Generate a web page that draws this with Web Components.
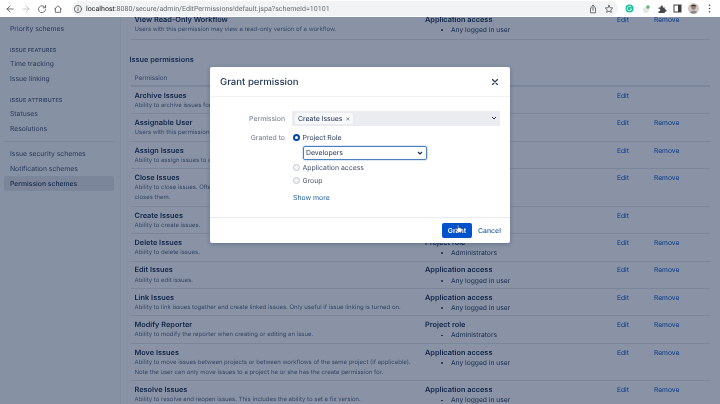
<!DOCTYPE html>
<html><head><meta charset="utf-8">
<style>
html,body{margin:0;padding:0;width:720px;height:404px;overflow:hidden;background:#fff;font-family:Inter,"Liberation Sans",sans-serif;text-rendering:geometricPrecision}
#app{position:relative;width:720px;height:404px;overflow:hidden;display:flex;flex-direction:column;filter:blur(.45px)}
</style></head><body>
<div id="app">
<chrome-bar url-host="localhost" url-path=":8080/secure/admin/EditPermissions!default.jspa?schemeId=10101"></chrome-bar>
<admin-layout>
  <side-nav slot="nav">
    <nav-item>Priority schemes</nav-item>
    <nav-heading>ISSUE FEATURES</nav-heading>
    <nav-item>Time tracking</nav-item>
    <nav-item>Issue linking</nav-item>
    <nav-heading>ISSUE ATTRIBUTES</nav-heading>
    <nav-item>Statuses</nav-item>
    <nav-item>Resolutions</nav-item>
    <nav-divider></nav-divider>
    <nav-item>Issue security schemes</nav-item>
    <nav-item>Notification schemes</nav-item>
    <nav-item selected>Permission schemes</nav-item>
  </side-nav>
  <perm-row first title="View Read-Only Workflow" group="Application access" member="Any logged in user" remove>Users with this permission may view a read-only version of a workflow.</perm-row>
  <section-heading>Issue permissions</section-heading>
  <table-head>Permission</table-head>
  <perm-row title="Archive Issues">Ability to archive issues for</perm-row>
  <perm-row title="Assignable User" remove>Users with this permission</perm-row>
  <perm-row title="Assign Issues" remove>Ability to assign issues to o</perm-row>
  <perm-row title="Close Issues" remove>Ability to close issues. Often<br>closes them.</perm-row>
  <perm-row title="Create Issues">Ability to create issues.</perm-row>
  <perm-row title="Delete Issues" group="Project role" member="Administrators" remove>Ability to delete issues.</perm-row>
  <perm-row title="Edit Issues" group="Application access" member="Any logged in user" remove>Ability to edit issues.</perm-row>
  <perm-row title="Link Issues" group="Application access" member="Any logged in user" remove>Ability to link issues together and create linked issues. Only useful if issue linking is turned on.</perm-row>
  <perm-row title="Modify Reporter" group="Project role" member="Administrators" remove>Ability to modify the reporter when creating or editing an issue.</perm-row>
  <perm-row title="Move Issues" group="Application access" member="Any logged in user" remove>Ability to move issues between projects or between workflows of the same project (if applicable).<br>Note the user can only move issues to a project he or she has the create permission for.</perm-row>
  <perm-row title="Resolve Issues" group="Application access" member="Any logged in user" remove>Ability to resolve and reopen issues. This includes the ability to set a fix version.</perm-row>
</admin-layout>
<modal-blanket></modal-blanket>
<grant-dialog></grant-dialog>
</div>
<script>
function def(name, css, html, init){
  customElements.define(name, class extends HTMLElement{
    constructor(){super();this.attachShadow({mode:'open'}).innerHTML='<style>'+css+'</style>'+html;}
    connectedCallback(){ if(init) init.call(this,this.shadowRoot); }
  });
}
const st='fill="none" stroke-linecap="round" stroke-linejoin="round"';
def('chrome-bar',`
:host{display:flex;flex:none;height:17px;background:#fff;align-items:center;box-sizing:border-box;font-family:Roboto,"Liberation Sans",sans-serif;position:relative;z-index:3}
svg{display:block;flex:none}
.nav{display:flex;width:72px;padding-left:2px;box-sizing:border-box}
.nav svg{width:16px;height:16px}
.box{width:546px;height:15px;border-radius:8px;background:#f1f3f4;display:flex;align-items:center;padding:0 4px 0 1px;box-sizing:border-box}
.box .i{margin:0 3px 0 0}
.url{flex:1;font-size:7.050px;color:#6a6e73;white-space:nowrap;letter-spacing:.01px}
.url b{font-weight:400;color:#202124}
.r{display:flex;align-items:center}
`,`
<div class="nav">
<svg viewBox="0 0 16 16" ${st} stroke="#5f6368" stroke-width=".9"><path d="M11.200 8H5M8 5 5 8l3 3"/></svg>
<svg viewBox="0 0 16 16" ${st} stroke="#c1c4c8" stroke-width=".9"><path d="M5 8h6.200M8 5l3 3-3 3"/></svg>
<svg viewBox="0 0 16 16" ${st} stroke="#5f6368" stroke-width=".9"><path d="M11 6.400A3.500 3.500 0 1 0 11.500 8.500M11.500 4.500v2.300H9.200"/></svg>
<svg viewBox="0 0 16 16" ${st} stroke="#5f6368" stroke-width=".9"><path d="M4.600 8 8 4.800 11.400 8M5.400 7.500v3.800h5.200V7.500"/></svg>
</div>
<div class="box">
<svg class="i" width="10" height="10" viewBox="0 0 10 10" ${st} stroke="#5f6368" stroke-width=".9"><circle cx="5" cy="5" r="3.600"/><path d="M5 4.600v2M5 3.200v.1"/></svg>
<div class="url"><b id="h"></b><span id="p"></span></div>
<svg width="10" height="10" viewBox="0 0 10 10" ${st} stroke="#5f6368" stroke-width=".9" style="margin-right:6px"><path d="M3.300 3.800H2.500v5h5v-5h-.8M5 6.400V1.200M3.700 2.500 5 1.200l1.300 1.300"/></svg>
<svg width="10" height="10" viewBox="0 0 10 10" ${st} stroke="#5f6368" stroke-width=".9"><path d="m5 1.300 1.100 2.400 2.600.3-1.900 1.800.5 2.600L5 7.100 2.700 8.400l.5-2.600L1.300 4l2.600-.3z"/></svg>
</div>
<div class="r">
<svg style="margin-left:6.500px" width="9" height="9" viewBox="0 0 9 9"><circle cx="4.500" cy="4.500" r="4" fill="#17c29b"/><path d="M6.200 3.200A2.200 2.200 0 1 0 6.600 5H5" fill="none" stroke="#fff" stroke-width=".9"/></svg>
<svg style="margin-left:8px" width="10" height="10" viewBox="0 0 10 10"><circle cx="4" cy="6" r="3" fill="#e4e8e4"/><path d="M6 1v4M4 3h4" stroke="#3aa655" stroke-width="1.100"/></svg>
<svg style="margin-left:5px" width="10" height="10" viewBox="0 0 10 10"><path d="M1.500 3.500H3.600V2.600a1.100 1.100 0 0 1 2.200 0v.9h2v2h.7a1.100 1.100 0 0 1 0 2.200h-.7v1.300H1.500V7.200h.6a1.200 1.200 0 0 0 0-2.400h-.6z" fill="#45484c"/></svg>
<svg style="margin-left:6px" width="9" height="9" viewBox="0 0 9 9"><rect x="1" y="1" width="7" height="7" fill="none" stroke="#3c4043" stroke-width="1"/><rect x="5" y="1" width="3" height="7" fill="#3c4043"/></svg>
<svg style="margin-left:6.500px" width="11" height="11" viewBox="0 0 11 11"><circle cx="5.500" cy="5.500" r="5.500" fill="#cfc9c4"/><circle cx="5.500" cy="4.500" r="2.300" fill="#9b7e70"/><path d="M2.500 3.500C3 1 8 1 8.500 3.500 7 2.800 4 2.800 2.500 3.500z" fill="#2b2726"/><path d="M2 9.500c1-2.500 6-2.500 7 0-2 1.500-5 1.500-7 0z" fill="#8a8a8e"/></svg>
<svg style="margin-left:9px" width="3" height="9" viewBox="0 0 3 9"><g fill="#45484c"><circle cx="1.500" cy="1.200" r=".8"/><circle cx="1.500" cy="4.500" r=".8"/><circle cx="1.500" cy="7.800" r=".8"/></g></svg>
</div>`,function(s){s.getElementById('h').textContent=this.getAttribute('url-host');s.getElementById('p').textContent=this.getAttribute('url-path');});

def('admin-layout',`
:host{display:flex;flex:1;min-height:0;overflow:hidden;background:#fff}
.nav{width:120px;flex:none;border-right:1px solid #f1f2f4;background:#fcfcfd}
main{flex:1;padding:0 0 0 8.500px;margin-top:-2px;min-width:0}
`,`<div class="nav"><slot name="nav"></slot></div><main><slot></slot></main>`);

def('side-nav',`:host{display:block;padding:3.500px 6px 0 4px}`,`<slot></slot>`);
def('nav-item',`
:host{display:block;height:15px;line-height:15px;padding-left:6px;font-size:6.800px;color:#42526e;border-radius:2px;white-space:nowrap}
:host([selected]){background:#e4e6ea;color:#253858;font-weight:500}
`,`<slot></slot>`);
def('nav-heading',`
:host{display:block;height:10px;line-height:10px;margin-top:10px;padding:0 0 0 6px;font-size:5.400px;font-weight:600;letter-spacing:.12px;color:#5e6c84;white-space:nowrap}
`,`<slot></slot>`);
def('nav-divider',`:host{display:block;height:1px;background:#e4e6ea;margin:5.500px 0 4px 0}`,``);

def('perm-row',`
:host{display:grid;grid-template-columns:290.500px 192px 37px 1fr;padding:3.800px 0 2.200px 3.500px;border-bottom:1px solid #e4e6ea;font-size:6.700px;line-height:10.200px;margin:0 0 0 1.500px;width:579px;box-sizing:border-box}
:host([first]){padding-top:0;padding-bottom:3.100px}
.t{font-size:7.350px;font-weight:600;color:#172b4d;white-space:nowrap}
.d{font-size:6px;color:#5e6c84;white-space:nowrap}
.m{color:#253858;padding-left:26px;position:relative}
.m::before{content:"";position:absolute;left:16px;top:4.200px;width:1.800px;height:1.800px;border-radius:50%;background:#253858}
a{color:#0052cc}
`,`<div><div class="t" id="t"></div><div class="d"><slot></slot></div></div>
<div id="g"></div><div><a id="e">Edit</a></div><div><a id="r"></a></div>`,function(s){
  s.getElementById('t').textContent=this.getAttribute('title');
  const g=this.getAttribute('group');
  if(g){const G=s.getElementById('g');const a=document.createElement('div');a.className='t';a.textContent=g;const b=document.createElement('div');b.className='m';b.textContent=this.getAttribute('member');G.append(a,b);}
  if(this.hasAttribute('remove'))s.getElementById('r').textContent='Remove';
});
def('section-heading',`:host{display:block;margin-top:15px;height:10px;line-height:10px;font-size:7.350px;font-weight:600;color:#253858}`,`<slot></slot>`);
def('table-head',`:host{display:block;margin:8.500px 0 0 1.500px;width:579px;box-sizing:border-box;padding:0 0 3.500px 3.500px;height:14px;line-height:10px;font-size:6.300px;color:#5e6c84;border-bottom:2px solid #e4e6ea}`,`<slot></slot>`);

def('modal-blanket',`:host{position:absolute;left:0;right:0;top:17px;bottom:0;background:rgba(9,30,66,.48);z-index:1}`,``);

def('grant-dialog',`
:host{position:absolute;left:210px;top:67px;width:300px;height:175.500px;background:#fff;border-radius:2px;box-shadow:0 1px 4px rgba(9,30,66,.3);z-index:2;display:flex;flex-direction:column;font-family:Inter,"Liberation Sans",sans-serif;color:#172b4d}
header{height:29px;flex:none;box-sizing:content-box;display:flex;align-items:center;justify-content:space-between;padding:0 11px 0 10px;border-bottom:1px solid #f1f2f4}
h1{margin:2px 0 0;font-size:9.600px;font-weight:500;color:#253858}
.body{flex:1;display:grid;grid-template-columns:75px 208px;column-gap:7px;grid-auto-rows:min-content;padding-top:13.500px}
.l{font-size:6.900px;color:#6b778c;text-align:right;line-height:15px}
.sel{height:15px;background:#ebecf0;display:flex;align-items:center;justify-content:space-between;padding:0 3px;box-sizing:border-box;margin-bottom:5.500px}
.tag{height:11px;background:#f7f8f9;border-radius:2px;display:flex;align-items:center;padding:0 3px;font-size:6.900px;color:#172b4d;gap:3px}
.tag i{font-style:normal;color:#6b778c;font-size:7px}
.rad{display:flex;align-items:center;height:13px;gap:3px;font-size:6.900px;color:#42526e;padding-left:.5px}
.rad.on{color:#253858}
.dot{width:7px;height:7px;border-radius:50%;background:#f4f5f7;border:1px solid #c1c7d0;box-sizing:border-box;flex:none}
.on .dot{background:#fff;border:2.200px solid #0747a6}
.role{margin:1.500px 0 1.500px 11px;width:124px;height:14px;box-sizing:border-box;border:1px solid #4a7fc0;box-shadow:0 0 0 .8px #cfe0f5;border-radius:2px;display:flex;align-items:center;justify-content:space-between;padding:0 3px 0 2px;font-size:6.900px;color:#253858}
.more{font-size:6.900px;color:#1d5a9e;margin:6px 0 0 1px;line-height:10px}
footer{height:25px;flex:none;border-top:1px solid #ebecf0;display:flex;align-items:center;justify-content:flex-end;gap:6px;padding:0 10px 0 0;position:relative}
.btn{width:30px;height:15px;background:#0052cc;border-radius:2px;color:#fff;font-size:6.900px;font-weight:600;display:flex;align-items:center;justify-content:center}
.cancel{font-size:6.900px;color:#1d5a9e;font-weight:500;width:22px}
.hand{position:absolute;left:244.500px;top:6.500px}
`,`
<header><h1>Grant permission</h1>
<svg width="8" height="8" viewBox="0 0 8 8" fill="none" stroke="#253858" stroke-width="1.100" stroke-linecap="round"><path d="M1.500 1.500l5 5M6.500 1.500l-5 5"/></svg></header>
<div class="body">
<div class="l">Permission</div>
<div class="sel"><div class="tag">Create Issues <i>×</i></div>
<svg width="6" height="6" viewBox="0 0 6 6" fill="none" stroke="#253858" stroke-width="1"><path d="M1 2l2 2 2-2"/></svg></div>
<div class="l" style="line-height:13px">Granted to</div>
<div>
<div class="rad on"><span class="dot"></span>Project Role</div>
<div class="role"><span>Developers</span><svg width="6" height="6" viewBox="0 0 6 6" fill="none" stroke="#172b4d" stroke-width="1.100"><path d="M1 2l2 2 2-2"/></svg></div>
<div class="rad"><span class="dot"></span>Application access</div>
<div class="rad"><span class="dot"></span>Group</div>
<div class="more">Show more</div>
</div>
</div>
<footer><div class="btn">Grant</div><div class="cancel">Cancel</div>
<svg class="hand" width="8" height="9" viewBox="0 0 8 9"><path d="M2.600.900c.5-.3 1 0 1 .5v2.200l2.600.6c.7.200 1 .7.900 1.300l-.4 2.200c-.1.400-.4.600-.8.600H3.200c-.3 0-.6-.1-.7-.4L.700 5c-.3-.5.300-1 .8-.6l1 .8V1.400z" fill="#fff" stroke="#222" stroke-width=".45"/></svg>
</footer>`);
</script>
</body></html>
